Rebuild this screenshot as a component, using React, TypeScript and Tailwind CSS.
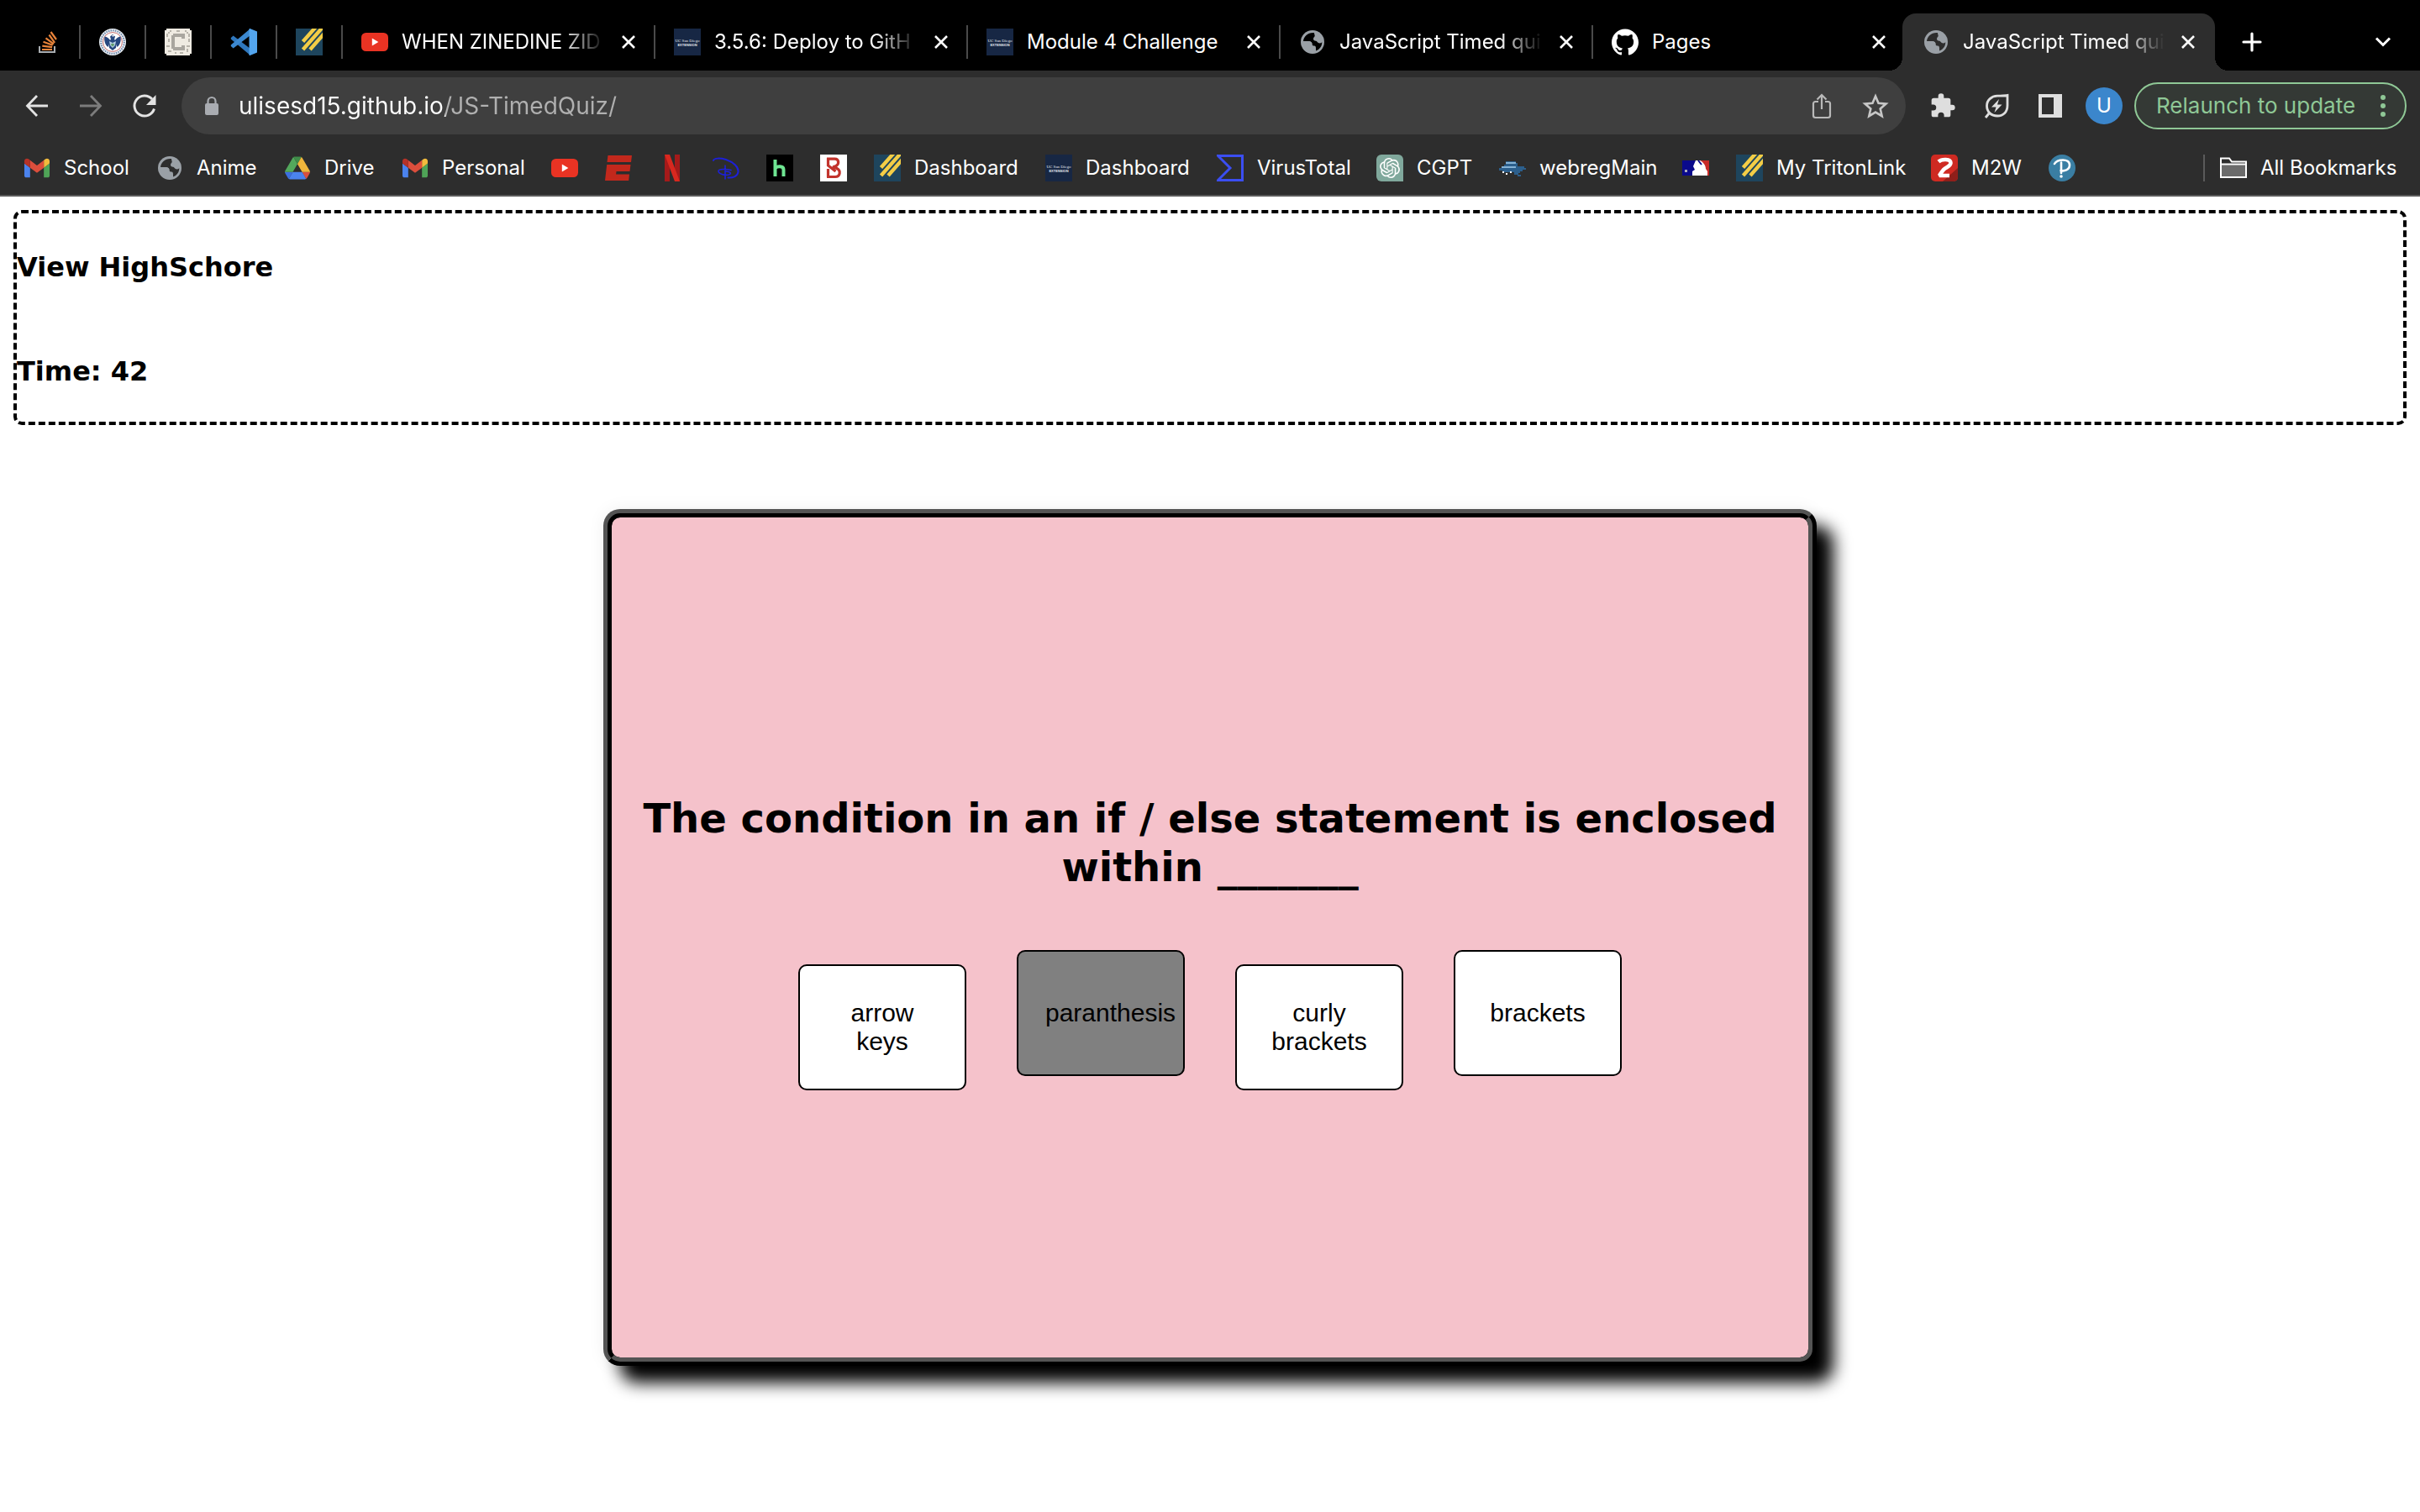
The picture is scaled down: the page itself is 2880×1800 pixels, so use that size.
import type { ReactNode } from "react";
import { SiGithub, SiOpenai } from "react-icons/si";

/* ---------- site icons ---------- */

const StackOverflowIcon = () => (
  <svg viewBox="0 0 32 32" className="size-8" fill="none">
    <path d="M7 21v7h18v-7" stroke="#a9adb1" strokeWidth="2" />
    <g stroke="#e8833a" strokeWidth="2.2">
      <path d="M10 25h12M10.300 20.600l11.800 1.600M11.500 15.800l11.200 4M14.500 11.300l9.400 7M18.500 7.500l6.600 9.400M20.500 4l6.500 9" />
    </g>
  </svg>
);

const SealIcon = () => (
  <svg viewBox="0 0 32 32" className="size-8">
    <circle cx="16" cy="16" r="16" fill="#e9eef3" />
    <circle cx="16" cy="16" r="13.800" fill="none" stroke="#6d86a8" strokeWidth="2" strokeDasharray="1.500 1.200" />
    <circle cx="16" cy="16" r="11.400" fill="#fff" stroke="#c0504d" strokeWidth="0.800" />
    <path d="M6.500 9.500c3 .3 5 2 7 5L10.500 22c-3-2-5-7-4-12.500zM25.500 9.500c-3 .3-5 2-7 5l3 7.500c3-2 5-7 4-12.500z" fill="#27477f" />
    <path d="M16 7l3 2.500-1 3.500 3 2-1 8-4 3-4-3-1-8 3-2-1-3.500z" fill="#27477f" />
    <path d="M12 15l4 2 4-2-1 5-3 3-3-3z" fill="#b9d0e4" />
    <path d="M13.500 19l2.500-1.500 2.500 1.500-2.500 2.500z" fill="#5e9b6c" />
    <path d="M15 8h3l-1.500 2z" fill="#fff" />
  </svg>
);

const CIcon = () => (
  <svg viewBox="0 0 16 16" className="size-8" shapeRendering="crispEdges">
    <path d="M1 0h14v1h1v14h-1v1H1v-1H0V1h1z" fill="#efebe2" />
    <path d="M5 3h7v3h-2V5H6v6h4v-1h2v3H5v-1H4V4h1z" fill="#a9a69f" />
    <path d="M3 1h1v1H3zM7 1h2v1H7zM12 1h1v1h-1zM1 3h1v2H1zM14 3h1v2h-1zM2 6h1v2H2zM14 6h1v2h-1zM1 10h2v1H1zM13 10h2v1h-2zM2 13h2v1H2zM6 14h1v1H6zM9 14h2v1H9zM13 12h1v2h-1zM2 2h1v1H2zM13 2h1v1h-1z" fill="#b7b3aa" />
  </svg>
);

const VSCodeIcon = () => (
  <svg viewBox="0 0 32 32" className="size-8">
    <path d="M.8 11l2.800-2.500L24 24v8L.8 12.500z" fill="#2f77bd" />
    <path d="M.8 21l2.800 2.500L24 8V0L.8 19.500z" fill="#3b88d0" />
    <path d="M23.500 0L32 3.600v24.800L23.500 32c-1 0-1-.5-1-1.500V1.500c0-1 0-1.500 1-1.500z" fill="#53a5ee" />
  </svg>
);

const TritonIcon = () => (
  <svg viewBox="0 0 32 32" className="size-8">
    <rect width="32" height="32" fill="#1e455d" />
    <path d="M8.500 15.500L24 -2M8.500 25L32.500 -2M17 25L36 3.500" stroke="#f3cd46" strokeWidth="4.400" />
  </svg>
);

const YouTubeIcon = () => (
  <svg viewBox="0 0 32 32" className="size-8">
    <rect y="5" width="32" height="22" rx="5.500" fill="#e93323" />
    <path d="M12.800 11.500v9l7.600-4.500z" fill="#fff" />
  </svg>
);

const ExtensionSchoolIcon = () => (
  <svg viewBox="0 0 32 32" className="size-8">
    <rect width="32" height="32" fill="#172744" />
    <text x="16" y="16" textAnchor="middle" fontSize="5" fill="#e3e7ee" fontFamily="Liberation Serif, serif">UC San Diego</text>
    <text x="16" y="21" textAnchor="middle" fontSize="4" fontWeight="700" fill="#e3e7ee" fontFamily="Liberation Sans, sans-serif">EXTENSION</text>
  </svg>
);

const GlobeIcon = ({ hole }: { hole: string }) => (
  <svg viewBox="0 0 32 32" className="size-8">
    <circle cx="16" cy="16" r="14" fill="#9aa0a6" />
    <path
      d="M18 5c-7-.8-12.500 4-13 10h6c3 0 4.500 1.500 4.500 3.500 0 1.500 1 2 2.500 2 1.800 0 2 1.500 2 3v3c4.500-1.600 7.300-5.500 7.300-10.300-1.300 1.300-3 1.600-4.500.8-1.300-.7-1.300-2-2.800-2.200-2-.3-3-1-3-2.600 0-2 1.700-2.200 1.700-3.700 0-1.300-.7-1.800-.7-3.500z"
      className={hole}
    />
    <path d="M5 15h6c3 0 4.500 1.500 4.500 3.500 0 1.500-1 2-2 2.300v5.700C8.700 25.500 5 21 5 15z" fill="#9aa0a6" />
  </svg>
);

const GmailIcon = () => (
  <svg viewBox="52 42 88 66" className="h-8 w-[30px]">
    <path fill="#4b83ee" d="M58 108h14V74L52 59v43c0 3.320 2.690 6 6 6" />
    <path fill="#4fa457" d="M120 108h14c3.320 0 6-2.690 6-6V59l-20 15" />
    <path fill="#f2bb3d" d="M120 48v26l20-15v-8c0-7.420-8.470-11.650-14.400-7.200" />
    <path fill="#dc4e3c" d="M72 74V48l24 18 24-18v26L96 92" />
    <path fill="#b53228" d="M52 51v8l20 15V48l-5.600-4.200c-5.940-4.450-14.400-.22-14.400 7.200" />
  </svg>
);

const DriveIcon = () => (
  <svg viewBox="0 0 87.300 78" className="h-8 w-[30px]">
    <path fill="#3c6fe0" d="m6.600 66.850 3.850 6.650c.8 1.400 1.950 2.500 3.300 3.300l13.750-23.800h-27.500c0 1.550.4 3.100 1.200 4.500z" />
    <path fill="#53a85c" d="m43.650 25-13.750-23.800c-1.350.8-2.500 1.900-3.300 3.300l-25.400 44a9.060 9.060 0 0 0 -1.200 4.500h27.500z" />
    <path fill="#d9503f" d="m73.550 76.800c1.350-.8 2.500-1.900 3.300-3.300l1.600-2.750 7.650-13.250c.8-1.400 1.200-2.950 1.200-4.500h-27.500l5.850 11.500z" />
    <path fill="#3f8c49" d="m43.650 25 13.750-23.800c-1.350-.8-2.900-1.200-4.500-1.200h-18.500c-1.600 0-3.150.45-4.500 1.200z" />
    <path fill="#4b83ee" d="m59.800 53h-32.300l-13.750 23.800c1.350.8 2.900 1.200 4.500 1.200h50.800c1.600 0 3.150-.45 4.500-1.200z" />
    <path fill="#f0b63c" d="m73.400 26.500-12.700-22c-.8-1.400-1.950-2.500-3.300-3.300l-13.750 23.800 16.150 28h27.450c0-1.550-.4-3.100-1.200-4.500z" />
  </svg>
);

const EspnIcon = () => (
  <svg viewBox="0 0 32 32" className="size-8">
    <path fill="#c2281c" d="M3.500 1H32l-1 8H2.500zM2.200 12H30.500l-1 8H13.500l-.4 3.500H29L28.200 31H0z" />
  </svg>
);

const NetflixIcon = () => (
  <svg viewBox="0 0 32 32" className="size-8">
    <path fill="#a51a1a" d="M7 0h6v32H7zM19 0h6v32h-6z" />
    <path fill="#d8281f" d="M7 0h6l12 32h-6z" />
  </svg>
);

const DisneyIcon = () => (
  <svg viewBox="0 0 32 32" className="size-8" fill="none" stroke="#1d20d8" strokeLinecap="round">
    <path d="M1 7C2 4 9 4 16 6c9 3 15 9 14.500 14.500-.5 5-6 7.500-12 7" strokeWidth="2" />
    <path d="M15 13v16M22 18.500c-5-1.500-15-1.500-15 1 0 3.500 7 5.500 12 4.500 4-1 3-3.500-3-4" strokeWidth="1.600" />
  </svg>
);

const LetterHIcon = () => (
  <svg viewBox="0 0 32 32" className="size-8">
    <rect width="32" height="32" fill="#000" />
    <path d="M10.500 6v20M10.500 16.500c2-3 10-3.500 10 1.500v8" fill="none" stroke="#6fe592" strokeWidth="4" />
  </svg>
);

const LetterBIcon = () => (
  <svg viewBox="0 0 32 32" className="size-8">
    <rect width="32" height="32" fill="#fff" />
    <path d="M9.500 4v9l9 7M9.500 27V17M8 5.200h9.500c5 0 5.500 6 1.500 8.300l-4 2M8 26.500h10c6 0 7-7.500 2-10l-5-2.500" fill="none" stroke="#c2332c" strokeWidth="3.200" />
  </svg>
);

const VirusTotalIcon = () => (
  <svg viewBox="0 0 32 32" className="size-8">
    <path d="M1.500 1.500h29v29h-29L16 16z" fill="none" stroke="#3b4ef2" strokeWidth="3" />
  </svg>
);

const ChatIcon = () => (
  <span className="flex size-8 items-center justify-center rounded-md rounded-br-none bg-[#80a89c]">
    <SiOpenai className="size-6 text-white" />
  </span>
);

const WhaleIcon = () => (
  <svg viewBox="0 0 32 32" className="size-8" shapeRendering="crispEdges">
    <path d="M8 8h12v2h2v4h8v2h2v2h-4v2h-3v2h-2v2h3v2h-4v-2h-4v-3H4v-2H0v-3h3v-2h3v-2h2z" fill="#2c5f8c" />
    <path d="M8 9h12v2H8zM3 14h17v2H3z" fill="#86b3d6" />
    <path d="M4 20h2v2H4zM8 22h2v2H8zM13 20h2v2h-2z" fill="#fff" />
  </svg>
);

const BaseballIcon = () => (
  <svg viewBox="0 0 32 32" className="size-8">
    <rect y="7" width="32" height="18" fill="#0a0a8c" />
    <path d="M20 7h12v18H25z" fill="#c82a26" />
    <path d="M16 7h5c4 2 7 6 7 10l2 3v5H12v-5l3-2-2-4z" fill="#fff" />
    <path d="M3 18h3v3H3z" fill="#aab" />
    <path d="M19 7l4 5" stroke="#0a0a8c" strokeWidth="2" />
  </svg>
);

const TwoIcon = () => (
  <svg viewBox="0 0 32 32" className="size-8">
    <rect width="32" height="32" rx="5" fill="#cf2a22" />
    <path d="M32 16v11a5 5 0 0 1-5 5H14z" fill="#8f1f1a" />
    <path d="M9 8.500C13 5 23.500 5 23.500 10c0 4-6 5-8.500 8s-3 4-5 7h12" fill="none" stroke="#fff" strokeWidth="4.600" strokeLinejoin="bevel" />
  </svg>
);

const PearsonIcon = () => (
  <svg viewBox="0 0 32 32" className="size-8">
    <circle cx="16" cy="16" r="16" fill="#3a7ea3" />
    <path d="M7 11c3-5.500 18-7 18 1.500 0 6-6.500 7.500-10.500 6.500M15 9.500V22" fill="none" stroke="#fff" strokeWidth="2.600" strokeLinecap="round" />
    <circle cx="15" cy="26" r="1.800" fill="#fff" />
  </svg>
);

/* ---------- browser glyphs ---------- */

const CloseGlyph = () => (
  <svg viewBox="0 0 16 16" className="size-4" stroke="#fff" strokeWidth="2.600">
    <path d="M1 1l14 14M15 1L1 15" />
  </svg>
);

/* ---------- tab strip ---------- */

const pinned = [
  { name: "Stack Overflow", icon: <StackOverflowIcon /> },
  { name: "Homeland Security", icon: <SealIcon /> },
  { name: "Coding", icon: <CIcon /> },
  { name: "Visual Studio Code", icon: <VSCodeIcon /> },
  { name: "TritonLink", icon: <TritonIcon /> },
];

const tabs: { title: string; icon: ReactNode; active?: boolean; divider?: boolean; fade?: boolean }[] = [
  { title: "WHEN ZINEDINE ZID", icon: <YouTubeIcon />, divider: true, fade: true },
  { title: "3.5.6: Deploy to GitH", icon: <ExtensionSchoolIcon />, divider: true, fade: true },
  { title: "Module 4 Challenge", icon: <ExtensionSchoolIcon />, divider: true },
  { title: "JavaScript Timed qui", icon: <GlobeIcon hole="fill-black" />, divider: true, fade: true },
  { title: "Pages", icon: <SiGithub className="size-8 text-white" /> },
  { title: "JavaScript Timed qui", icon: <GlobeIcon hole="fill-[#2d2d2d]" />, active: true, fade: true },
];

const Divider = () => <span className="h-10 w-0.5 shrink-0 bg-[#4a4a4a]" />;

function Tab({ title, icon, active, divider, fade }: (typeof tabs)[number]) {
  return (
    <div
      className={
        active
          ? "relative -ml-1 flex h-full w-[372px] items-center rounded-t-2xl bg-[#2d2d2d] pl-6"
          : "flex h-full w-[372px] items-center pl-[22px]"
      }
    >
      {active && (
        <>
          <span className="absolute bottom-0 -left-4 size-4 bg-[radial-gradient(circle_at_0_0,transparent_16px,#2d2d2d_16px)]" />
          <span className="absolute -right-4 bottom-0 size-4 bg-[radial-gradient(circle_at_100%_0,transparent_16px,#2d2d2d_16px)]" />
        </>
      )}
      <a href="#" className="flex min-w-0 flex-1 items-center gap-4">
        <span className="shrink-0">{icon}</span>
        <span
          className={
            fade
              ? "min-w-0 flex-1 whitespace-nowrap [mask-image:linear-gradient(to_right,black_calc(100%_-_52px),transparent)]"
              : "min-w-0 flex-1 whitespace-nowrap"
          }
        >
          {title}
        </span>
      </a>
      <button type="button" aria-label={`Close ${title}`} className="mr-[22px] ml-5 flex size-4 items-center justify-center">
        <CloseGlyph />
      </button>
      {divider ? <Divider /> : <span className="w-0.5" />}
    </div>
  );
}

const TabStrip = () => (
  <div className="flex h-[84px] bg-black pt-4 pl-[18px]">
    {pinned.map((p) => (
      <div key={p.name} className="flex h-full w-[78px] items-center justify-between pl-[22px]">
        <a href="#" aria-label={p.name}>{p.icon}</a>
        <Divider />
      </div>
    ))}
    {tabs.map((t, i) => (
      <Tab key={i} {...t} />
    ))}
    <button type="button" aria-label="New tab" className="ml-8 flex w-6 items-center">
      <svg viewBox="0 0 24 24" className="size-6" stroke="#fff" strokeWidth="3.200" strokeLinecap="round">
        <path d="M12 2v20M2 12h20" />
      </svg>
    </button>
    <button type="button" aria-label="Search tabs" className="mr-[34px] ml-auto flex items-center">
      <svg viewBox="0 0 20 20" className="size-5" fill="none" stroke="#fff" strokeWidth="3">
        <path d="M2 5.500l8 8 8-8" />
      </svg>
    </button>
  </div>
);

/* ---------- toolbar ---------- */

const IconButton = ({ label, children }: { label: string; children: ReactNode }) => (
  <button type="button" aria-label={label} className="flex size-8 shrink-0 items-center justify-center">
    {children}
  </button>
);

const Toolbar = () => (
  <div className="flex h-[84px] items-center pr-4 pl-7">
    <div className="flex gap-8">
      <IconButton label="Back">
        <svg viewBox="0 0 32 32" className="size-8" fill="none" stroke="#e3e3e3" strokeWidth="2.800">
          <path d="M29 16H5M16 4L4.500 16 16 28" />
        </svg>
      </IconButton>
      <IconButton label="Forward">
        <svg viewBox="0 0 32 32" className="size-8" fill="none" stroke="#7c7c7c" strokeWidth="2.800">
          <path d="M3 16h24M16 4l11.500 12L16 28" />
        </svg>
      </IconButton>
      <IconButton label="Reload">
        <svg viewBox="0 0 32 32" className="size-8" fill="none">
          <path d="M27.500 19.500A12 12 0 1 1 25 8" stroke="#e3e3e3" strokeWidth="3" />
          <path d="M29.500 3v12H18z" fill="#e3e3e3" />
        </svg>
      </IconButton>
    </div>

    <div className="mx-7 flex h-[68px] min-w-0 flex-1 items-center rounded-full bg-[#3f3f3f] pr-5 pl-6">
      <svg viewBox="0 0 24 24" className="size-6 shrink-0">
        <path d="M7.500 10V6.500a4.500 4.500 0 0 1 9 0V10" fill="none" stroke="#a9acb1" strokeWidth="2.200" />
        <rect x="4" y="9" width="16" height="14" rx="2" fill="#a9acb1" />
      </svg>
      <input
        aria-label="Address and search bar"
        defaultValue="ulisesd15.github.io/JS-TimedQuiz/"
        className="ml-5 min-w-0 flex-1 bg-[linear-gradient(to_right,#ffffff_246px,#b0b0b0_246px)] bg-clip-text text-[28px] leading-9 text-transparent outline-none"
      />
      <div className="flex gap-8">
        <IconButton label="Share this page">
          <svg viewBox="0 0 32 32" className="size-8" fill="none" stroke="#b9b9b9" strokeWidth="2.200">
            <path d="M12 11H8.500C7 11 6 12 6 13.500v14C6 29 7 30 8.500 30h15c1.500 0 2.500-1 2.500-2.500v-14c0-1.500-1-2.500-2.500-2.500H20M16 20V3.500M10.500 8.500L16 3l5.500 5.500" />
          </svg>
        </IconButton>
        <IconButton label="Bookmark this tab">
          <svg viewBox="0 0 32 32" className="size-8" fill="none" stroke="#c7c7c7" strokeWidth="2.600">
            <path d="M16 4.500l3.500 8.300 9 .8-6.800 5.900 2 8.700-7.700-4.600-7.700 4.600 2-8.700-6.800-5.900 9-.8z" />
          </svg>
        </IconButton>
      </div>
    </div>

    <div className="flex gap-8">
      <IconButton label="Extensions">
        <svg viewBox="0 0 24 24" className="size-8" fill="#dedede">
          <path d="M20.500 11H19V7a2 2 0 0 0-2-2h-4V3.500a2.500 2.500 0 0 0-5 0V5H4a2 2 0 0 0-2 2v3.800h1.500a2.700 2.700 0 0 1 0 5.400H2V20a2 2 0 0 0 2 2h3.800v-1.500a2.700 2.700 0 0 1 5.400 0V22H17a2 2 0 0 0 2-2v-4h1.500a2.500 2.500 0 0 0 0-5z" />
        </svg>
      </IconButton>
      <IconButton label="Energy saver">
        <svg viewBox="0 0 32 32" className="size-8">
          <path d="M29 3.500v12C29 23.500 24 28 17 28c-7.500 0-12.500-5-12.500-12S10 4.500 17 4.200C22 4 26 4 29 3.500zM7.500 24.500L3 30" fill="none" stroke="#dedede" strokeWidth="2.800" />
          <path d="M19 8l-9 9.500h5.500L13.500 24l9-9.500H17z" fill="#dedede" />
        </svg>
      </IconButton>
      <IconButton label="Side panel">
        <svg viewBox="0 0 32 32" className="size-8">
          <path fillRule="evenodd" d="M2 2h28v28H2zM6 6v20h14V6z" fill="#dedede" />
        </svg>
      </IconButton>
    </div>
    <button type="button" aria-label="Profile" className="ml-[26px] size-11 shrink-0 rounded-full bg-[#3b86cc] text-2xl leading-[44px] text-white">
      U
    </button>
    <button
      type="button"
      className="ml-3.5 flex h-14 w-[324px] shrink-0 items-center justify-between rounded-full border-2 border-[#8fc896] bg-[#343935] pr-[23px] pl-6 text-[26px] whitespace-nowrap text-[#8fc896]"
    >
      Relaunch to update
      <svg viewBox="0 0 6 26" className="h-[26px] w-1.5" fill="#8fc896">
        <circle cx="3" cy="3" r="3" />
        <circle cx="3" cy="13" r="3" />
        <circle cx="3" cy="23" r="3" />
      </svg>
    </button>
  </div>
);

/* ---------- bookmarks bar ---------- */

const bookmarks: { name: string; icon: ReactNode; label?: string }[] = [
  { name: "School", icon: <GmailIcon />, label: "w-[78px]" },
  { name: "Anime", icon: <GlobeIcon hole="fill-[#2d2d2d]" />, label: "w-[72px]" },
  { name: "Drive", icon: <DriveIcon />, label: "w-[60px]" },
  { name: "Personal", icon: <GmailIcon />, label: "w-[98px]" },
  { name: "YouTube", icon: <YouTubeIcon /> },
  { name: "ESPN", icon: <EspnIcon /> },
  { name: "Netflix", icon: <NetflixIcon /> },
  { name: "Disney+", icon: <DisneyIcon /> },
  { name: "Hulu", icon: <LetterHIcon /> },
  { name: "B", icon: <LetterBIcon /> },
  { name: "Dashboard", icon: <TritonIcon />, label: "w-[124px]" },
  { name: "Dashboard", icon: <ExtensionSchoolIcon />, label: "w-[124px]" },
  { name: "VirusTotal", icon: <VirusTotalIcon />, label: "w-[110px]" },
  { name: "CGPT", icon: <ChatIcon />, label: "w-[66px]" },
  { name: "webregMain", icon: <WhaleIcon />, label: "w-[138px]" },
  { name: "MLB", icon: <BaseballIcon /> },
  { name: "My TritonLink", icon: <TritonIcon />, label: "w-[152px]" },
  { name: "M2W", icon: <TwoIcon />, label: "w-[60px]" },
  { name: "Pearson", icon: <PearsonIcon /> },
];

const BookmarksBar = () => (
  <nav aria-label="Bookmarks" className="flex h-[66px] items-center gap-8 border-b-2 border-[#5a5a5a] px-7">
    {bookmarks.map((b, i) => (
      <a key={i} href="#" aria-label={b.name} className="flex shrink-0 items-center gap-4">
        <span className="flex w-8 justify-center">{b.icon}</span>
        {b.label && <span className={`whitespace-nowrap ${b.label}`}>{b.name}</span>}
      </a>
    ))}
    <button type="button" className="ml-auto flex shrink-0 items-center gap-4">
      <span className="mr-0.5 h-8 w-0.5 bg-[#5a5a5a]" />
      <svg viewBox="0 0 32 32" className="size-8" strokeWidth="2">
        <path d="M1 27V4.500h10l3 4h17V27z" fill="none" stroke="#fff" />
        <path d="M2 12h28v14H2z" fill="#6b6b6b" />
        <path d="M1 11.500h30" stroke="#fff" />
      </svg>
      <span className="w-[162px] whitespace-nowrap">All Bookmarks</span>
    </button>
  </nav>
);

/* ---------- quiz page ---------- */

const answers = [
  { text: "arrow keys", tone: "bg-white" },
  { text: "paranthesis", tone: "bg-[#808080]" },
  { text: "curly brackets", tone: "bg-white" },
  { text: "brackets", tone: "bg-white" },
];

const QuizPage = () => (
  <main className="flex flex-col items-center px-4 pt-4 pb-16 font-['DejaVu_Sans',sans-serif] font-bold text-black">
    <header className="flex w-full flex-col items-start gap-[86px] rounded-[10px] border-4 border-dashed border-black pt-[45px] pb-[41px] text-[32px] leading-[38px]">
      <h3>View HighSchore</h3>
      <h3>Time: 42</h3>
    </header>
    <section className="mt-[100px] flex min-h-[1020px] w-[1444px] max-w-full flex-col items-center justify-center gap-[70px] rounded-[20px] border-[10px] border-black bg-[#f5c2cb] pt-2.5 [border-style:ridge] shadow-[20px_20px_20px_#000,0_0_20px_#00000010]">
      <h1 className="px-8 text-center text-5xl leading-[58px]">
        The condition in an if / else statement is enclosed within _______
      </h1>
      <div className="flex items-baseline gap-[60px] font-['Liberation_Sans',sans-serif] text-3xl leading-[34px] font-normal">
        {answers.map((a) => (
          <button
            key={a.text}
            type="button"
            className={`h-[150px] w-[200px] rounded-[10px] border-2 border-black px-8 text-center ${a.tone}`}
          >
            {a.text}
          </button>
        ))}
      </div>
    </section>
  </main>
);

export default function App() {
  return (
    <div className="min-h-screen bg-white">
      <div className="bg-[#2d2d2d] font-['Inter',sans-serif] text-2xl text-white">
        <TabStrip />
        <Toolbar />
        <BookmarksBar />
      </div>
      <QuizPage />
    </div>
  );
}
